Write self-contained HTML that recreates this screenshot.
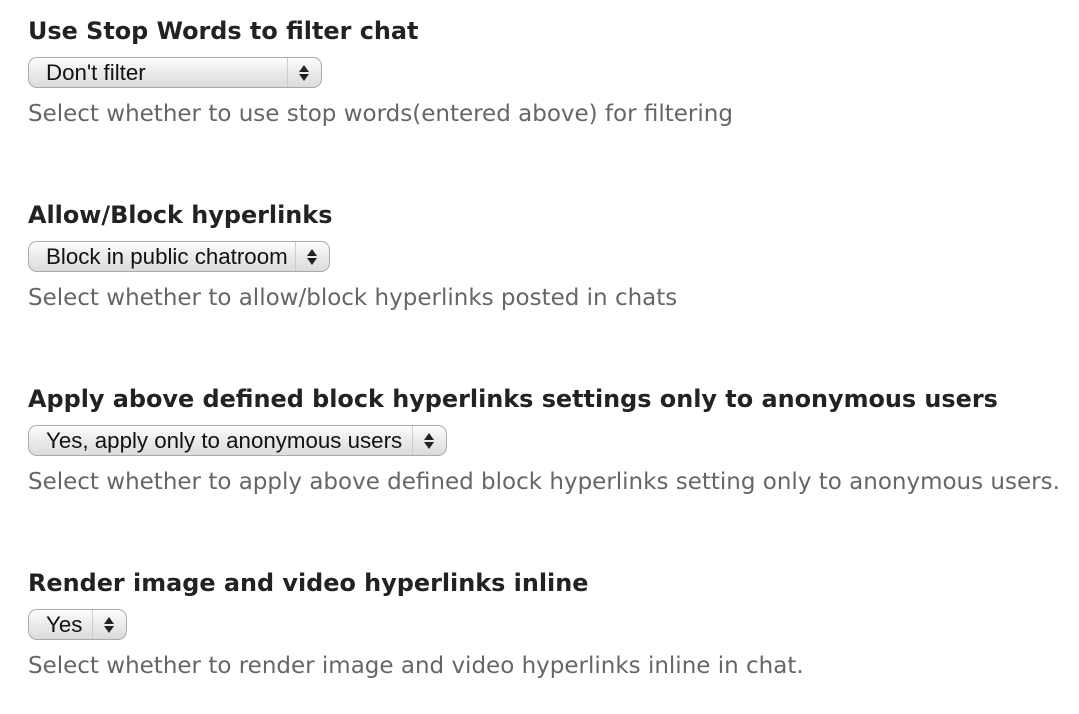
<!DOCTYPE html>
<html><head><meta charset="utf-8"><style>
body{margin:0;background:#fff;width:1079px;height:714px;overflow:hidden;position:relative;font-family:"DejaVu Sans","Liberation Sans",sans-serif}
.h{position:absolute;left:28px;font-weight:bold;font-size:23.9px;color:#222;white-space:nowrap;line-height:26px}
.d{position:absolute;left:28px;font-size:23px;color:#666;white-space:nowrap;line-height:26px}
.s{position:absolute;left:28px;height:29px;border:1px solid #aaa;border-radius:9px;background:linear-gradient(#fdfdfd,#eaeaea 50%,#dcdcdc);box-shadow:inset 0 1px 0 #fff;font-family:"Liberation Sans",sans-serif;font-size:22.3px;color:#111;line-height:29px;box-sizing:content-box}
.s .t{position:absolute;left:17px;top:0;white-space:nowrap}
.s .a{position:absolute;top:0;bottom:0;width:33px;border-left:1px solid #ccc;right:0}
.s .a:before{content:"";position:absolute;left:11px;top:7px;border:5px solid transparent;border-bottom:7px solid #222;border-top:0}
.s .a:after{content:"";position:absolute;left:11px;top:16px;border:5px solid transparent;border-top:7px solid #222;border-bottom:0}
</style></head><body>
<div class="h" style="top:18px">Use Stop Words to filter chat</div>
<div class="s" style="top:57px;width:292px"><span class="t">Don't filter</span><span class="a"></span></div>
<div class="d" style="top:101px">Select whether to use stop words(entered above) for filtering</div>

<div class="h" style="top:202px">Allow/Block hyperlinks</div>
<div class="s" style="top:241px;width:300px"><span class="t">Block in public chatroom</span><span class="a"></span></div>
<div class="d" style="top:285px">Select whether to allow/block hyperlinks posted in chats</div>

<div class="h" style="top:386px">Apply above defined block hyperlinks settings only to anonymous users</div>
<div class="s" style="top:425px;width:417px"><span class="t">Yes, apply only to anonymous users</span><span class="a"></span></div>
<div class="d" style="top:469px">Select whether to apply above defined block hyperlinks setting only to anonymous users.</div>

<div class="h" style="top:570px">Render image and video hyperlinks inline</div>
<div class="s" style="top:609px;width:97px"><span class="t">Yes</span><span class="a"></span></div>
<div class="d" style="top:653px">Select whether to render image and video hyperlinks inline in chat.</div>
</body></html>
